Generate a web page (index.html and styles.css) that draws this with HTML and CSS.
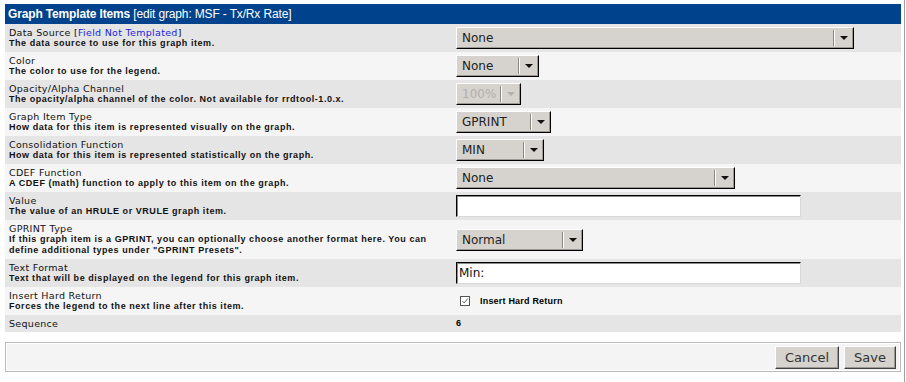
FILE: index.html
```html
<!DOCTYPE html>
<html lang="en">
<head>
    <meta charset="UTF-8">
    <title>Graph Template Items</title>
    <link rel="stylesheet" href="styles.css">
</head>
<body>
    <div class="page">
        <div class="panel">
            <div class="panel-header"><b>Graph Template Items</b> [edit graph: MSF - Tx/Rx Rate]</div>

            <div class="row dark">
                <div class="label">
                    <span class="title">Data Source [<span class="flag">Field Not Templated</span>]</span>
                    <span class="desc">The data source to use for this graph item.</span>
                </div>
                <div class="field">
                    <span class="dropdown dd-source"><span class="dd-value">None</span><span class="dd-arrow"></span></span>
                </div>
            </div>

            <div class="row light">
                <div class="label">
                    <span class="title">Color</span>
                    <span class="desc">The color to use for the legend.</span>
                </div>
                <div class="field">
                    <span class="dropdown dd-color"><span class="dd-value">None</span><span class="dd-arrow"></span></span>
                </div>
            </div>

            <div class="row dark">
                <div class="label">
                    <span class="title">Opacity/Alpha Channel</span>
                    <span class="desc">The opacity/alpha channel of the color. Not available for rrdtool-1.0.x.</span>
                </div>
                <div class="field">
                    <span class="dropdown dd-alpha disabled"><span class="dd-value">100%</span><span class="dd-arrow"></span></span>
                </div>
            </div>

            <div class="row light">
                <div class="label">
                    <span class="title">Graph Item Type</span>
                    <span class="desc">How data for this item is represented visually on the graph.</span>
                </div>
                <div class="field">
                    <span class="dropdown dd-type"><span class="dd-value">GPRINT</span><span class="dd-arrow"></span></span>
                </div>
            </div>

            <div class="row dark">
                <div class="label">
                    <span class="title">Consolidation Function</span>
                    <span class="desc">How data for this item is represented statistically on the graph.</span>
                </div>
                <div class="field">
                    <span class="dropdown dd-cf"><span class="dd-value">MIN</span><span class="dd-arrow"></span></span>
                </div>
            </div>

            <div class="row light">
                <div class="label">
                    <span class="title">CDEF Function</span>
                    <span class="desc">A CDEF (math) function to apply to this item on the graph.</span>
                </div>
                <div class="field">
                    <span class="dropdown dd-cdef"><span class="dd-value">None</span><span class="dd-arrow"></span></span>
                </div>
            </div>

            <div class="row dark">
                <div class="label">
                    <span class="title">Value</span>
                    <span class="desc">The value of an HRULE or VRULE graph item.</span>
                </div>
                <div class="field">
                    <input type="text" class="textbox" value="">
                </div>
            </div>

            <div class="row light">
                <div class="label">
                    <span class="title">GPRINT Type</span>
                    <span class="desc">If this graph item is a GPRINT, you can optionally choose another format here. You can define additional types under "GPRINT Presets".</span>
                </div>
                <div class="field">
                    <span class="dropdown dd-gprint"><span class="dd-value">Normal</span><span class="dd-arrow"></span></span>
                </div>
            </div>

            <div class="row dark">
                <div class="label">
                    <span class="title">Text Format</span>
                    <span class="desc">Text that will be displayed on the legend for this graph item.</span>
                </div>
                <div class="field">
                    <input type="text" class="textbox" value="Min:">
                </div>
            </div>

            <div class="row light">
                <div class="label">
                    <span class="title">Insert Hard Return</span>
                    <span class="desc">Forces the legend to the next line after this item.</span>
                </div>
                <div class="field">
                    <label class="check">
                        <svg class="check-box" width="10" height="10" viewBox="0 0 10 10">
                            <rect x="0.5" y="0.5" width="9" height="9" fill="#fff" stroke="#555"/>
                            <path d="M2.5 5.2 L4.2 7 L7.6 2.6" fill="none" stroke="#666" stroke-width="1"/>
                        </svg>
                        <span>Insert Hard Return</span>
                    </label>
                </div>
            </div>

            <div class="row dark">
                <div class="label">
                    <span class="title">Sequence</span>
                </div>
                <div class="field">
                    <span class="static">6</span>
                </div>
            </div>
        </div>

        <div class="actions">
            <div class="actions-inner">
                <button type="button" class="btn">Cancel</button>
                <button type="button" class="btn">Save</button>
            </div>
        </div>
    </div>
</body>
</html>
```

FILE: styles.css
```css
/* Page frame with the thin border on the right */
body {
    margin: 0;
    background: #fff;
    color: #000;
    font-family: "Liberation Sans", Arial, sans-serif;
}
.page {
    width: 905px;
    height: 382px;
    box-sizing: border-box;
    padding: 4px 0 0 5px;
    border-right: 1px solid #a0a0a0;
}
/* Edit form panel */
.panel {
    width: 896px;
}
.panel-header {
    height: 20px;
    line-height: 20px;
    padding-left: 3px;
    background: #00438c;
    color: #fff;
    font-size: 12px;
    letter-spacing: -0.15px;
    white-space: nowrap;
}
.row {
    display: grid;
    grid-template-columns: 447px 1fr;
    align-items: center;
}
.row.dark {
    background: #e5e5e5;
}
.row.light {
    background: #f5f5f5;
}
.label {
    padding: 3px 4px;
    line-height: 11px;
}
.title {
    display: block;
    font-family: "DejaVu Sans", Verdana, sans-serif;
    font-size: 9.5px;
    letter-spacing: 0.3px;
    color: #111;
}
.flag {
    color: #2222dd;
}
.desc {
    display: block;
    font-size: 9px;
    font-weight: bold;
    letter-spacing: 0.55px;
    color: #111;
}
.field {
    padding: 0 4px;
    display: flex;
    align-items: center;
}
/* Old-style raised drop downs */
.dropdown {
    display: inline-flex;
    align-items: center;
    height: 22px;
    box-sizing: border-box;
    background: #d6d2ce;
    border: 1px solid;
    border-color: #fff #000 #000 #fff;
    box-shadow: inset -1px -1px 0 #9c9894;
    font-family: "DejaVu Sans", Verdana, sans-serif;
    font-size: 12px;
    color: #222;
}
.dd-value {
    flex: 1;
    padding-left: 5px;
    white-space: nowrap;
    overflow: hidden;
}
.dd-arrow {
    position: relative;
    width: 18px;
    height: 16px;
    border-left: 1px solid #fff;
    box-shadow: -1px 0 0 #8a8682;
}
.dd-arrow::after {
    content: "";
    position: absolute;
    left: 5px;
    top: 6px;
    border-left: 4px solid transparent;
    border-right: 4px solid transparent;
    border-top: 4px solid #111;
}
.dropdown.disabled {
    color: #b4b0ac;
}
.dropdown.disabled .dd-arrow::after {
    border-top-color: #b4b0ac;
}
.dd-source { width: 398px; }
.dd-color { width: 83px; }
.dd-alpha { width: 65px; }
.dd-type { width: 95px; }
.dd-cf { width: 88px; }
.dd-cdef { width: 279px; }
.dd-gprint { width: 127px; }
/* Text inputs */
.textbox {
    width: 345px;
    height: 22px;
    box-sizing: border-box;
    margin: 0;
    padding: 0 2px;
    background: #fff;
    border: 1px solid;
    border-color: #000 #d8d8d8 #d8d8d8 #000;
    box-shadow: inset 1px 1px 0 #8a8a8a;
    font-family: "DejaVu Sans", Verdana, sans-serif;
    font-size: 12px;
    color: #111;
}
.check {
    display: flex;
    align-items: center;
    gap: 10px;
    padding-left: 4px;
    font-size: 9px;
    font-weight: bold;
    letter-spacing: 0.2px;
}
.check-box {
    display: block;
}
.static {
    font-size: 9px;
    font-weight: bold;
    line-height: 11px;
}
/* Save / cancel bar */
.actions {
    width: 896px;
    box-sizing: border-box;
    margin-top: 10px;
    border: 1px solid #bbb;
    padding: 1px;
    background: #fff;
}
.actions-inner {
    display: flex;
    justify-content: flex-end;
    gap: 5px;
    padding: 2px 3px 1px;
    background: #f4f4f4;
}
.btn {
    height: 23px;
    padding: 0 9px;
    background: #d6d2ce;
    border: 1px solid;
    border-color: #fff #404040 #404040 #fff;
    box-shadow: inset -1px -1px 0 #9c9894;
    font-family: "DejaVu Sans", Verdana, sans-serif;
    font-size: 13px;
    color: #333;
    cursor: pointer;
}
```
